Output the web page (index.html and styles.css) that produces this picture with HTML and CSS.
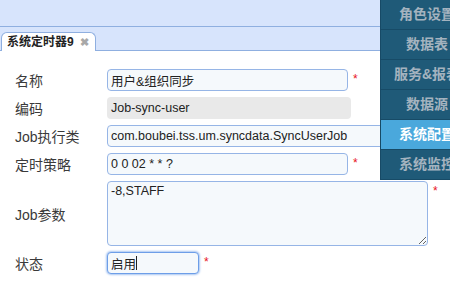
FILE: index.html
```html
<!DOCTYPE html>
<html lang="zh-CN">
<head>
  <meta charset="UTF-8" />
  <title>系统定时器</title>
  <link rel="stylesheet" href="styles.css">
</head>
<body>
  <div class="top-band"></div>
  <div class="tab-bar">
    <div class="tab">系统定时器9 <span class="tab-close">✖</span></div>
  </div>

  <form class="job-form">
    <label class="field-label">名称</label>
    <div class="field"><input class="text-input w-normal" value="用户&amp;组织同步"><span class="required">*</span></div>

    <label class="field-label">编码</label>
    <div class="field"><div class="readonly-box">Job-sync-user</div></div>

    <label class="field-label">Job执行类</label>
    <div class="field"><input class="text-input w-wide" value="com.boubei.tss.um.syncdata.SyncUserJob"></div>

    <label class="field-label">定时策略</label>
    <div class="field"><input class="text-input w-normal" value="0 0 02 * * ?"><span class="required">*</span></div>

    <label class="field-label">Job参数</label>
    <div class="field field-top"><textarea class="text-area">-8,STAFF</textarea><span class="required">*</span></div>

    <label class="field-label">状态</label>
    <div class="field"><input class="text-input w-small focused" value="启用"><span class="caret"></span><span class="required">*</span></div>
  </form>

  <ul class="side-menu">
    <li>角色设置</li>
    <li>数据表</li>
    <li>服务&amp;报表</li>
    <li>数据源</li>
    <li class="active">系统配置</li>
    <li>系统监控</li>
  </ul>
</body>
</html>
```

FILE: styles.css
```css
body {
  margin: 0;
  font-family: "Liberation Sans", "Noto Sans CJK SC", sans-serif;
  color: #333;
  background: #fff;
  width: 450px;
  height: 281px;
  overflow: hidden;
  position: relative;
}
.top-band {
  height: 26px;
  background: #d7e4fc;
  border-bottom: 1px solid #8fafe0;
}
.tab-bar {
  height: 23px;
  background: #d7e4fc;
  border-bottom: 1px solid #8fafe0;
  display: flex;
  align-items: flex-end;
  padding-left: 1px;
}
.tab {
  height: 19px;
  margin-bottom: -1px;
  width: 95px;
  box-sizing: border-box;
  background: #fff;
  border: 1px solid #8fafe0;
  border-bottom: none;
  border-radius: 6px 6px 0 0;
  font-size: 12px;
  font-weight: bold;
  color: #222;
  padding-left: 5px;
  line-height: 19px;
}
.tab-close {
  color: #a8a8a8;
  font-size: 11px;
  margin-left: 3px;
}
.job-form {
  display: grid;
  grid-template-columns: 92px 1fr;
  row-gap: 6px;
  padding: 18px 0 0 15px;
  font-size: 14px;
}
.field-label {
  display: flex;
  align-items: center;
  color: #3a3a3a;
}
.field {
  display: flex;
  align-items: center;
}
.field-top {
  align-items: flex-start;
}
.text-input, .text-area, .readonly-box {
  font-family: inherit;
  font-size: 12.5px;
  color: #222;
  box-sizing: border-box;
  border-radius: 4px;
}
.text-input {
  height: 22px;
  border: 1px solid #96b5e6;
  background: #f5f9fc;
  padding: 0 3px;
  outline: none;
}
.w-normal { width: 241px; }
.w-wide { width: 330px; }
.w-small { width: 92px; }
.text-input.focused {
  border-color: #6d9ee8;
  box-shadow: 0 0 2px 1px #a9c6f2;
}
.readonly-box {
  width: 244px;
  height: 22px;
  line-height: 22px;
  background: #e9e9e9;
  padding-left: 4px;
}
.text-area {
  width: 321px;
  height: 65px;
  border: 1px solid #96b5e6;
  background: #f5f9fc;
  padding: 2px 3px;
  resize: both;
  outline: none;
}
.required {
  color: #e8141c;
  font-size: 12px;
  margin-left: 5px;
  align-self: flex-start;
  margin-top: 3px;
}
.caret {
  width: 1px;
  height: 14px;
  background: #222;
  margin-left: -63px;
  margin-right: 62px;
}
.side-menu {
  position: absolute;
  top: 0;
  left: 380px;
  width: 92px;
  margin: 0;
  padding: 0;
  list-style: none;
  background: #1f5a78;
  border-left: 1px solid #174a66;
}
.side-menu li {
  height: 29px;
  line-height: 28px;
  border-bottom: 1px solid #174b67;
  text-align: center;
  color: #a4b3bf;
  font-size: 14px;
  font-weight: bold;
  white-space: nowrap;
}
.side-menu li.active {
  background: #4aa8dc;
  color: #fff;
}
```
